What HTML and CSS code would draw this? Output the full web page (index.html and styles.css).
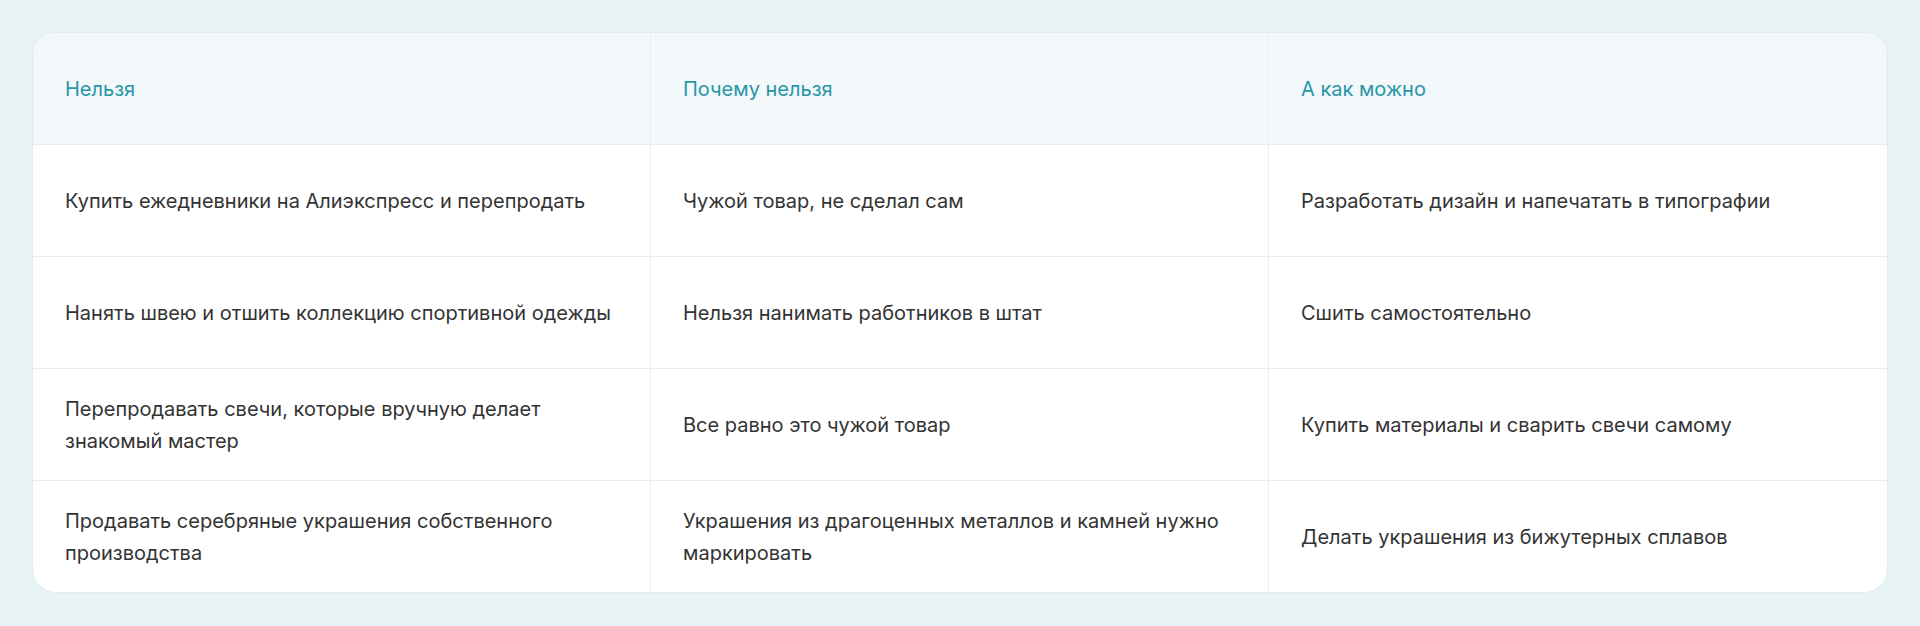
FILE: index.html
```html
<!DOCTYPE html>
<html lang="ru">
<head>
<meta charset="utf-8">
<title>Таблица</title>
<link rel="stylesheet" href="styles.css">
</head>
<body>
<div class="card">
  <div class="row head">
    <div class="cell">Нельзя</div>
    <div class="cell">Почему нельзя</div>
    <div class="cell">А как можно</div>
  </div>
  <div class="row">
    <div class="cell">Купить ежедневники на Алиэкспресс и перепродать</div>
    <div class="cell">Чужой товар, не сделал сам</div>
    <div class="cell">Разработать дизайн и напечатать в типографии</div>
  </div>
  <div class="row">
    <div class="cell">Нанять швею и отшить коллекцию спортивной одежды</div>
    <div class="cell">Нельзя нанимать работников в штат</div>
    <div class="cell">Сшить самостоятельно</div>
  </div>
  <div class="row">
    <div class="cell">Перепродавать свечи, которые вручную делает знакомый мастер</div>
    <div class="cell">Все равно это чужой товар</div>
    <div class="cell">Купить материалы и сварить свечи самому</div>
  </div>
  <div class="row">
    <div class="cell">Продавать серебряные украшения собственного производства</div>
    <div class="cell">Украшения из драгоценных металлов и камней нужно маркировать</div>
    <div class="cell">Делать украшения из бижутерных сплавов</div>
  </div>
</div>
</body>
</html>
```

FILE: styles.css
```css
* { box-sizing: border-box; }
html, body { margin: 0; padding: 0; }
body {
  background: #e7f3f5;
  padding: 32px;
  font-family: Inter, "Noto Sans", sans-serif;
  font-size: 20px;
  line-height: 32px;
  color: #333333;
}
.card {
  background: #ffffff;
  border: 1px solid #dfecf0;
  border-radius: 24px;
  overflow: hidden;
}
.row {
  display: grid;
  grid-template-columns: 1fr 1fr 1fr;
  height: 112px;
  border-bottom: 1px solid #e3eef2;
}
.row:last-child { border-bottom: none; height: 111px; }
.cell {
  display: flex;
  align-items: center;
  padding: 0 32px;
  border-right: 1px solid #e8f0f4;
}
.cell:last-child { border-right: none; }
.head {
  background: #f3f8fb;
  color: #2796a8;
}
```
